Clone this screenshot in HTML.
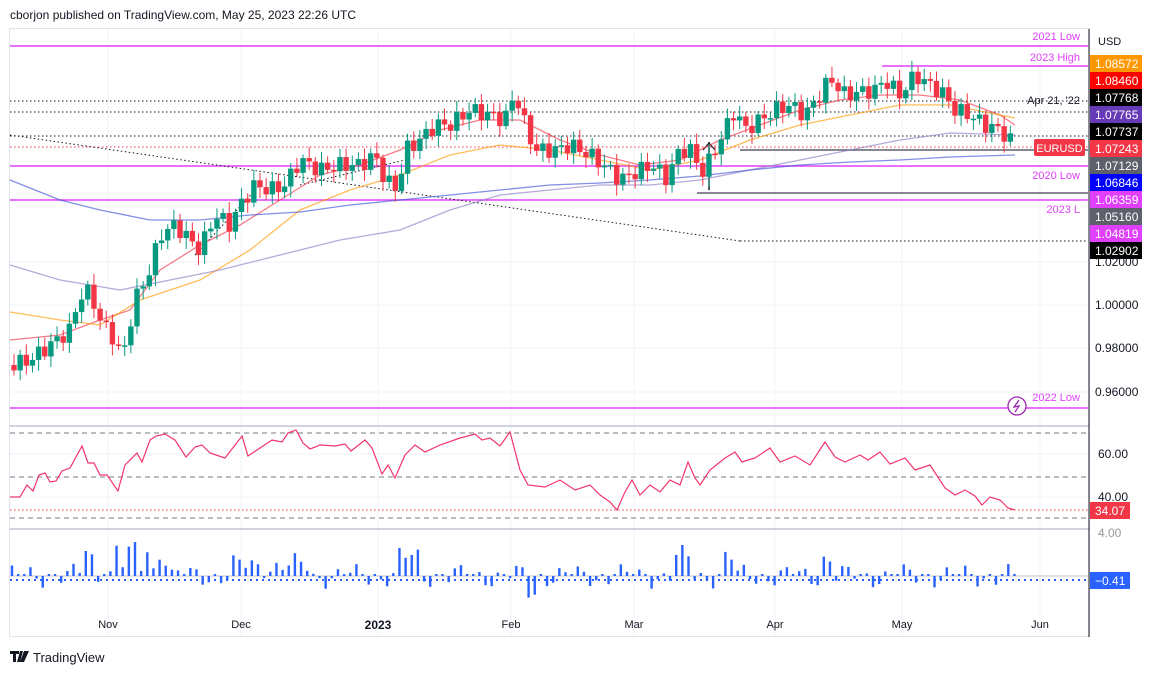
<!DOCTYPE html><html><head><meta charset="utf-8"><style>
body{margin:0;background:#fff;width:1157px;height:674px;overflow:hidden;font-family:"Liberation Sans",sans-serif}
svg{position:absolute;left:0;top:0}
</style></head><body>
<svg id="s" width="1157" height="674" xmlns="http://www.w3.org/2000/svg" font-family="Liberation Sans, sans-serif">
<rect width="1157" height="674" fill="#fff"/>
<text x="10" y="19" font-size="12" fill="#131722">cborjon published on TradingView.com, May 25, 2023 22:26 UTC</text>
<rect x="9.5" y="28.5" width="1080" height="608" fill="none" stroke="#e0e3eb"/>
<g stroke="#f0f3fa">
<line x1="108" y1="29" x2="108" y2="636"/><line x1="241" y1="29" x2="241" y2="636"/><line x1="378" y1="29" x2="378" y2="636"/><line x1="511" y1="29" x2="511" y2="636"/><line x1="634" y1="29" x2="634" y2="636"/><line x1="775" y1="29" x2="775" y2="636"/><line x1="902" y1="29" x2="902" y2="636"/><line x1="1040" y1="29" x2="1040" y2="636"/>
<line x1="10" y1="262" x2="1088" y2="262"/><line x1="10" y1="305" x2="1088" y2="305"/><line x1="10" y1="348" x2="1088" y2="348"/><line x1="10" y1="392" x2="1088" y2="392"/>
<line x1="10" y1="454" x2="1088" y2="454"/><line x1="10" y1="497" x2="1088" y2="497"/>
</g>
<line x1="10" y1="426" x2="1090" y2="426" stroke="#d1d4dc" stroke-width="2"/>
<line x1="10" y1="529" x2="1090" y2="529" stroke="#d1d4dc" stroke-width="2"/>
<line x1="1089" y1="29" x2="1089" y2="637" stroke="#131722"/>
<g fill="none">
<line x1="10" y1="46" x2="1088" y2="46" stroke="#e040fb" stroke-width="1.5"/>
<line x1="882" y1="66" x2="1088" y2="66" stroke="#e040fb" stroke-width="1.5"/>
<line x1="10" y1="101" x2="1088" y2="101" stroke="#131722" stroke-dasharray="1.5 2.5"/>
<line x1="10" y1="112" x2="1088" y2="112" stroke="#131722" stroke-dasharray="1.5 2.5"/>
<line x1="10" y1="136" x2="1088" y2="136" stroke="#131722" stroke-dasharray="1.5 2.5"/>
<line x1="10" y1="147" x2="1088" y2="147" stroke="#f23645" stroke-dasharray="1.5 2.5"/>
<line x1="740" y1="150" x2="1088" y2="150" stroke="#5d606b" stroke-width="1.5"/>
<line x1="10" y1="166" x2="1088" y2="166" stroke="#e040fb" stroke-width="1.5"/>
<line x1="697" y1="193" x2="1088" y2="193" stroke="#5d606b" stroke-width="1.5"/>
<line x1="10" y1="200" x2="1088" y2="200" stroke="#e040fb" stroke-width="1.5"/>
<line x1="740" y1="241" x2="1088" y2="241" stroke="#131722" stroke-dasharray="1.5 2.5"/>
<line x1="10" y1="408" x2="1088" y2="408" stroke="#e040fb" stroke-width="1.5"/>
<line x1="10" y1="135" x2="740" y2="241" stroke="#131722" stroke-dasharray="1.5 2.5"/>
<line x1="195" y1="255" x2="260" y2="185" stroke="#131722" stroke-dasharray="1.5 2.5"/>
<line x1="300" y1="185" x2="405" y2="160" stroke="#131722" stroke-dasharray="1.5 2.5"/>
<line x1="709" y1="190" x2="709" y2="142" stroke="#131722" stroke-width="1.5"/>
<path d="M703 150 L709 143 L715 150" stroke="#131722" stroke-width="1.2"/>
<line x1="10" y1="433" x2="1088" y2="433" stroke="#787b86" stroke-dasharray="5 4"/>
<line x1="10" y1="477" x2="1088" y2="477" stroke="#787b86" stroke-dasharray="5 4"/>
<line x1="10" y1="518" x2="1088" y2="518" stroke="#787b86" stroke-dasharray="5 4"/>
<line x1="10" y1="510" x2="1088" y2="510" stroke="#f23645" stroke-dasharray="1.5 2.5"/>
<line x1="10" y1="580" x2="1088" y2="580" stroke="#2962ff" stroke-width="2" stroke-dasharray="2 4"/>
<line x1="10" y1="576" x2="1088" y2="576" stroke="#b2b5be" stroke-width="0.7"/>
</g>
<g id="ma" fill="none" stroke-width="1.3"></g>
<g id="cd"></g>
<g id="rsi" fill="none"></g>
<g id="hist" fill="#2962ff"></g>
<g font-size="11" fill="#e040fb" text-anchor="end">
<text x="1080" y="40">2021 Low</text><text x="1080" y="61">2023 High</text>
<text x="1080" y="179">2020 Low</text><text x="1080" y="213">2023 L</text><text x="1080" y="401">2022 Low</text>
</g>
<text x="1080" y="104" font-size="11" fill="#131722" text-anchor="end">Apr 21, '22</text>
<rect x="1034" y="139" width="51" height="17" rx="2" fill="#f23645"/><text x="1059.5" y="152" font-size="11" fill="#fff" text-anchor="middle">EURUSD</text>
<circle cx="1017" cy="406" r="9" fill="#fff" stroke="#9c27b0" stroke-width="1.3"/><path d="M1019 400 L1014 407 L1019 406 L1015 412" stroke="#9c27b0" fill="none" stroke-width="1.3"/>
<text x="1098" y="45" font-size="11" fill="#131722">USD</text>
<g font-size="12" fill="#fff">
<rect x="1090" y="55" width="52" height="17" fill="#ff9800"/><text x="1095" y="68">1.08572</text>
<rect x="1090" y="72" width="52" height="17" fill="#ff0000"/><text x="1095" y="85">1.08460</text>
<rect x="1090" y="89" width="52" height="17" fill="#000"/><text x="1095" y="102">1.07768</text>
<rect x="1090" y="106" width="52" height="17" fill="#673ab7"/><text x="1095" y="119">1.07765</text>
<rect x="1090" y="123" width="52" height="17" fill="#000"/><text x="1095" y="136">1.07737</text>
<rect x="1090" y="140" width="52" height="17" fill="#f23645"/><text x="1095" y="153">1.07243</text>
<rect x="1090" y="157" width="52" height="17" fill="#5d606b"/><text x="1095" y="170">1.07129</text>
<rect x="1090" y="174" width="52" height="17" fill="#0000ff"/><text x="1095" y="187">1.06846</text>
<rect x="1090" y="191" width="52" height="17" fill="#e040fb"/><text x="1095" y="204">1.06359</text>
<rect x="1090" y="208" width="52" height="17" fill="#5d606b"/><text x="1095" y="221">1.05160</text>
<rect x="1090" y="225" width="52" height="17" fill="#e040fb"/><text x="1095" y="238">1.04819</text>
<rect x="1090" y="242" width="52" height="17" fill="#000"/><text x="1095" y="255">1.02902</text>
<rect x="1090" y="502" width="40" height="17" fill="#f23645"/><text x="1095" y="515">34.07</text>
<rect x="1090" y="572" width="40" height="17" fill="#2962ff"/><text x="1095" y="585">−0.41</text>
</g>
<g font-size="12" fill="#131722">
<text x="1095" y="266">1.02000</text><text x="1095" y="309">1.00000</text><text x="1095" y="352">0.98000</text><text x="1095" y="396">0.96000</text>
<text x="1098" y="458">60.00</text><text x="1098" y="501">40.00</text><text x="1098" y="537" fill="#999">4.00</text>
</g>
<g font-size="11" fill="#131722" text-anchor="middle">
<text x="108" y="628">Nov</text><text x="241" y="628">Dec</text><text x="378" y="629" font-size="12" font-weight="bold">2023</text><text x="511" y="628">Feb</text><text x="634" y="628">Mar</text><text x="775" y="628">Apr</text><text x="902" y="628">May</text><text x="1040" y="628">Jun</text>
</g>
<path d="M10 651 h9 v3 h-3 v8 h-3 v-8 h-3z M20 651 h3 l-3 11 h-3z M24 651 h5 l-5 11 h-4z" fill="#131722"/>
<text x="33" y="662" font-size="13" fill="#131722">TradingView</text>
</svg>
<script>
function interp(pts,x){for(let i=0;i<pts.length-1;i++){if(x>=pts[i][0]&&x<=pts[i+1][0]){const t=(x-pts[i][0])/(pts[i+1][0]-pts[i][0]);return pts[i][1]+t*(pts[i+1][1]-pts[i][1]);}}return pts[pts.length-1][1];}
const P=[[12,365],[30,360],[50,345],[70,330],[80,295],[90,292],[100,320],[115,340],[122,360],[135,300],[150,270],[160,235],[175,225],[190,240],[200,250],[215,215],[230,225],[240,205],[255,185],[270,190],[285,185],[300,160],[320,170],[340,165],[360,165],[375,155],[385,180],[398,190],[405,150],[420,140],[435,125],[450,125],[470,110],[490,115],[505,120],[515,92],[525,125],[535,150],[555,150],[570,145],[590,155],[610,170],[620,180],[640,170],[655,165],[665,180],[680,150],[693,150],[700,175],[710,160],[720,140],[735,110],[745,130],[760,120],[775,110],[790,105],[805,115],[820,95],[830,78],[845,95],[860,92],[875,90],[885,80],[900,95],[915,75],[930,85],[945,95],[955,110],[970,115],[985,125],[1000,130],[1015,145]];
let h='';let prev=interp(P,12);let k=0;
for(let x=14;x<=1015;x+=6.15){k++;const c=interp(P,x)+(Math.sin(k*2.3)*8);const o=prev;const up=c<o;const col=up?'#089981':'#f23645';const top=Math.min(o,c),bot=Math.max(o,c);const hi=top-3-Math.abs(Math.sin(k*1.7))*8,lo=bot+3+Math.abs(Math.cos(k*1.3))*8;
h+=`<line x1="${x}" y1="${hi}" x2="${x}" y2="${lo}" stroke="${col}"/><rect x="${x-2.7}" y="${top}" width="5.4" height="${Math.max(1.5,bot-top)}" fill="${col}"/>`;prev=c;}
document.getElementById('cd').innerHTML=h;
const MA={"#f23645":[[10,340],[60,335],[100,320],[130,310],[160,270],[200,245],[240,225],[280,200],[320,175],[360,165],[400,150],[440,130],[480,120],[520,120],[560,140],[600,155],[640,165],[680,160],[720,140],[760,125],[800,110],[840,100],[880,95],[920,95],[960,100],[1000,115],[1015,125]],
"#ff9800":[[10,312],[60,320],[100,325],[140,300],[200,280],[250,250],[300,210],[350,190],[400,175],[450,155],[500,145],[550,150],[600,160],[650,170],[700,160],[750,140],[800,125],[850,115],[900,105],[950,105],[1000,115],[1015,118]],
"#8e7cc3":[[10,265],[60,280],[120,290],[170,280],[220,270],[280,255],[340,240],[400,230],[450,210],[500,195],[550,190],[600,185],[650,185],[700,180],[750,170],[800,160],[850,150],[900,140],[950,133],[1015,135]],
"#3f51d5":[[10,180],[60,200],[100,210],[150,220],[200,220],[250,215],[300,212],[350,205],[400,200],[450,195],[500,190],[550,185],[600,183],[650,180],[700,176],[750,170],[800,165],[850,162],[900,160],[950,157],[1015,155]]};
let m='';for(const c in MA){m+=`<polyline stroke="${c}" stroke-opacity="0.65" points="${MA[c].map(p=>p.join(',')).join(' ')}"/>`;}
document.getElementById('ma').innerHTML=m;
const R=[[10,497],[20,497],[27,485],[33,491],[39,475],[45,473],[50,482],[56,481],[62,471],[70,468],[82,446],[88,463],[94,463],[100,475],[107,475],[118,491],[125,465],[137,453],[142,462],[150,440],[156,436],[165,434],[175,440],[186,457],[195,447],[202,445],[210,453],[225,458],[242,436],[248,456],[260,448],[272,440],[282,442],[288,433],[296,430],[303,443],[310,449],[320,445],[335,446],[345,444],[351,451],[365,440],[372,448],[382,474],[388,465],[395,478],[405,455],[415,445],[425,452],[440,445],[460,438],[475,434],[482,440],[490,438],[500,446],[510,432],[520,470],[528,485],[545,487],[560,480],[575,490],[590,485],[600,495],[610,502],[617,510],[625,492],[632,480],[640,495],[650,485],[660,492],[670,480],[680,485],[688,462],[695,478],[700,485],[710,470],[725,458],[735,452],[742,462],[755,458],[770,448],[780,462],[795,456],[810,465],[825,442],[835,457],[845,462],[860,455],[868,460],[880,452],[890,464],[905,458],[915,470],[930,465],[945,488],[955,495],[965,490],[975,496],[982,505],[990,497],[1000,500],[1008,508],[1015,510]];
document.getElementById('rsi').innerHTML=`<polyline stroke="#f2356b" stroke-width="1.2" points="${R.map(p=>p.join(',')).join(' ')}"/>`;
let hh='';k=0;for(let x=12;x<=1015;x+=6.15){k++;let v=Math.sin(k*1.9)*7+Math.sin(k*0.7)*6;if(x>75&&x<170)v+=Math.abs(Math.sin(k*1.3))*28;if(x>230&&x<310)v+=10;if(x>395&&x<420||x>675&&x<690||x>720&&x<735||x>820&&x<830)v+=18;if(x>95&&x<110||x>525&&x<540)v-=16;v=Math.max(-24,Math.min(42,v));if(Math.abs(v)<2)v=2;const y=v>0?576-v:576;hh+=`<rect x="${x-1.2}" y="${y}" width="2.4" height="${Math.abs(v)}"/>`;}
document.getElementById('hist').innerHTML=hh;
</script>
</body></html>
